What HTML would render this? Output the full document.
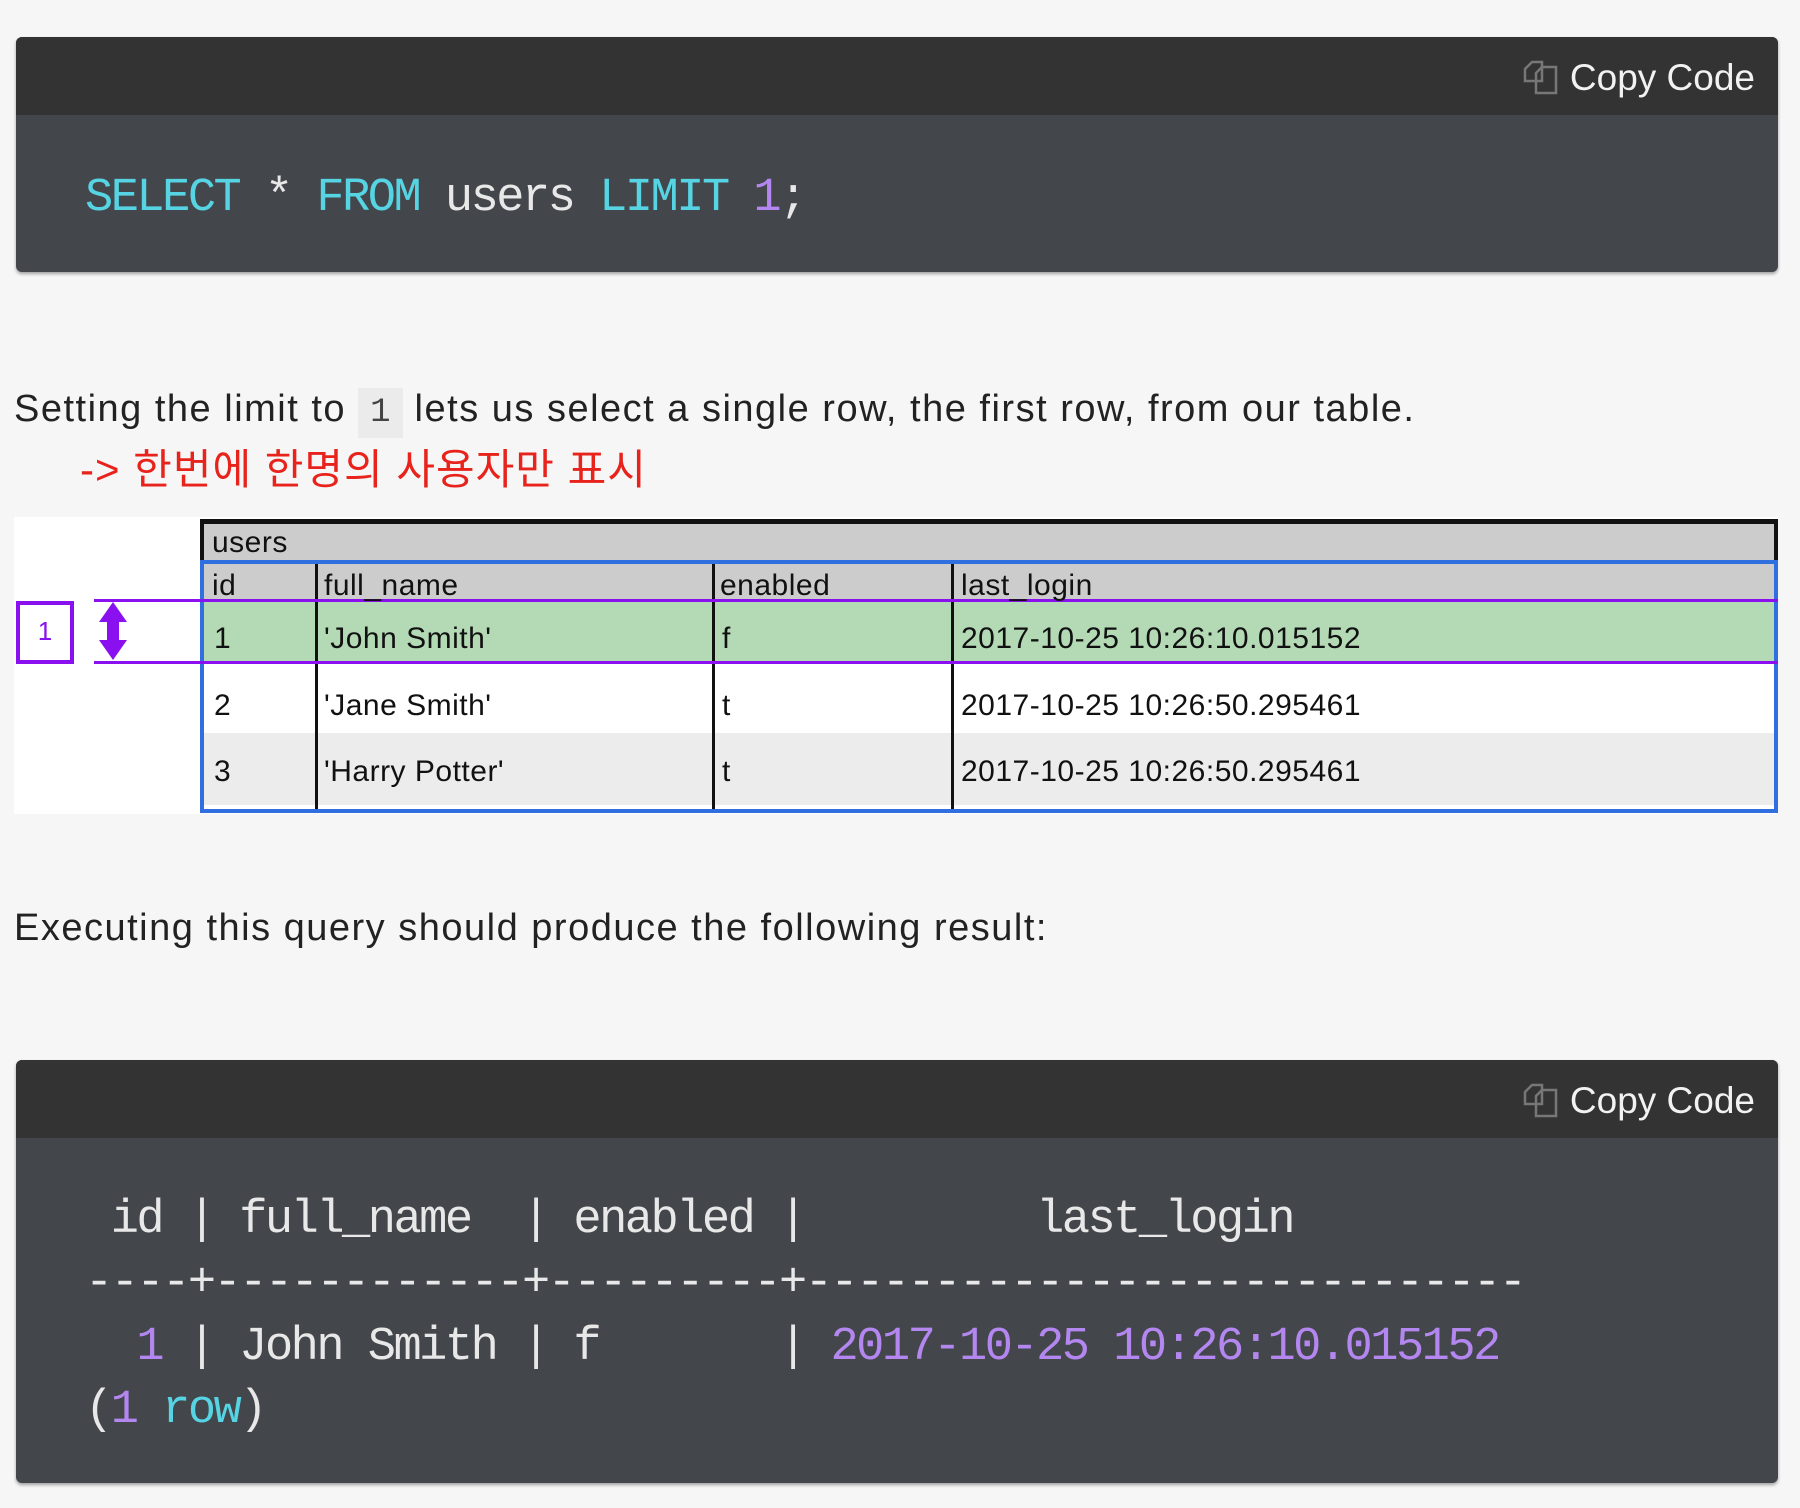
<!DOCTYPE html>
<html><head><meta charset="utf-8"><style>
*{margin:0;padding:0;box-sizing:border-box}
body{width:1800px;height:1508px;background:#f6f6f6;position:relative;overflow:hidden;font-family:"Liberation Sans","Noto Sans CJK KR",sans-serif}
.abs{position:absolute}
.code{position:absolute;left:16px;width:1762px;background:#43464b;border-radius:6px;overflow:hidden;box-shadow:0 2px 3px rgba(0,0,0,.35)}
.hdr{position:absolute;left:0;top:0;width:100%;background:#333333}
.copy{position:absolute;right:23px;color:#f2f2f2;font-size:37px;white-space:nowrap;display:flex;align-items:center;gap:10px}
.mono{font-family:"Liberation Mono","DejaVu Sans Mono",monospace;font-size:47px;letter-spacing:-2.5px;color:#e8e8e8;white-space:pre;position:absolute;line-height:1}
.k{color:#56d4e3}.n{color:#b487f0}
.txt{font-size:38px;color:#222;white-space:nowrap;position:absolute;line-height:1;letter-spacing:1.5px}
.tt{position:absolute;font-size:30px;color:#111;white-space:nowrap;line-height:1;letter-spacing:0.5px}
</style></head><body>

<div class="code" style="top:37px;height:235px">
  <div class="hdr" style="height:78px"></div>
  <div class="copy" style="top:20px">
    <svg width="38" height="38" viewBox="0 0 38 38" fill="none" stroke="#777" stroke-width="2.5"><path d="M3 10 L10 3 H20 V22 H3 Z"/><path d="M14 14 L20 8 H34 V34 H14 Z"/></svg>
    <span>Copy Code</span>
  </div>
  <div class="mono" style="left:69px;top:138px"><span class="k">SELECT</span> * <span class="k">FROM</span> users <span class="k">LIMIT</span> <span class="n">1</span>;</div>
</div>

<div class="txt" style="left:14px;top:390px">Setting the limit to <span style="font-family:'Liberation Mono',monospace;background:#ebebeb;padding:6px 12px;font-size:34px;color:#444;letter-spacing:0">1</span> lets us select a single row, the first row, from our table.</div>
<div class="txt" style="left:80px;top:449px;color:#e8231c;font-size:42px;letter-spacing:1px">-&gt; 한번에 한명의 사용자만 표시</div>

<div class="abs" style="left:14px;top:517px;width:1764px;height:297px;background:#fff"></div>
<div class="abs" style="left:200px;top:519px;width:1578px;height:44px;background:#cccccc;border-top:5px solid #111;border-left:4px solid #111;border-right:4px solid #111"></div>
<div class="abs" style="left:200px;top:561px;width:1578px;height:39px;background:#cccccc"></div>
<div class="abs" style="left:200px;top:600px;width:1578px;height:64px;background:#b3dab5"></div>
<div class="abs" style="left:200px;top:664px;width:1578px;height:69px;background:#fff"></div>
<div class="abs" style="left:200px;top:733px;width:1578px;height:72px;background:#ececec"></div>
<div class="abs" style="left:315px;top:563px;width:3px;height:248px;background:#111"></div>
<div class="abs" style="left:712px;top:563px;width:3px;height:248px;background:#111"></div>
<div class="abs" style="left:951px;top:563px;width:3px;height:248px;background:#111"></div>
<div class="abs" style="left:200px;top:560px;width:1578px;height:253px;border:4px solid #2f6fe0"></div>
<div class="abs" style="left:94px;top:599px;width:1684px;height:3px;background:#8a10f0"></div>
<div class="abs" style="left:94px;top:661px;width:1684px;height:3px;background:#8a10f0"></div>
<div class="abs" style="left:16px;top:601px;width:58px;height:63px;border:4px solid #8a10f0;color:#8a10f0;font-size:26px;text-align:center;line-height:52px">1</div>
<svg class="abs" style="left:95px;top:600px" width="36" height="62" viewBox="0 0 36 62"><path d="M18 2 L32 22 H24 V40 H32 L18 60 L4 40 H12 V22 H4 Z" fill="#8a10f0"/></svg>

<div class="tt" style="left:212px;top:528px">users</div>
<div class="tt" style="left:212px;top:571px">id</div>
<div class="tt" style="left:324px;top:571px">full_name</div>
<div class="tt" style="left:720px;top:571px">enabled</div>
<div class="tt" style="left:961px;top:571px">last_login</div>
<div class="tt" style="left:214px;top:624px">1</div>
<div class="tt" style="left:324px;top:624px">'John Smith'</div>
<div class="tt" style="left:722px;top:624px">f</div>
<div class="tt" style="left:961px;top:624px">2017-10-25 10:26:10.015152</div>
<div class="tt" style="left:214px;top:691px">2</div>
<div class="tt" style="left:324px;top:691px">'Jane Smith'</div>
<div class="tt" style="left:722px;top:691px">t</div>
<div class="tt" style="left:961px;top:691px">2017-10-25 10:26:50.295461</div>
<div class="tt" style="left:214px;top:757px">3</div>
<div class="tt" style="left:324px;top:757px">'Harry Potter'</div>
<div class="tt" style="left:722px;top:757px">t</div>
<div class="tt" style="left:961px;top:757px">2017-10-25 10:26:50.295461</div>

<div class="txt" style="left:14px;top:909px">Executing this query should produce the following result:</div>

<div class="code" style="top:1060px;height:423px">
  <div class="hdr" style="height:78px"></div>
  <div class="copy" style="top:20px">
    <svg width="38" height="38" viewBox="0 0 38 38" fill="none" stroke="#777" stroke-width="2.5"><path d="M3 10 L10 3 H20 V22 H3 Z"/><path d="M14 14 L20 8 H34 V34 H14 Z"/></svg>
    <span>Copy Code</span>
  </div>
  <div class="mono" style="left:69px;top:137px"> id | full_name  | enabled |         last_login</div>
  <div class="mono" style="left:69px;top:200px">----+------------+---------+----------------------------</div>
  <div class="mono" style="left:69px;top:264px">  <span class="n">1</span> | John Smith | f       | <span class="n">2017-10-25 10:26:10.015152</span></div>
  <div class="mono" style="left:69px;top:327px">(<span class="n">1</span> <span class="k">row</span>)</div>
</div>

</body></html>
